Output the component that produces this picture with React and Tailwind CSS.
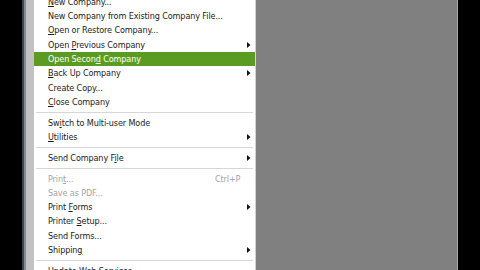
const items = [
  { label: 'New Company...', key: 0 },
  { label: 'New Company from Existing Company File...' },
  { label: 'Open or Restore Company...', key: 0 },
  { label: 'Open Previous Company', key: 5, sub: true },
  { label: 'Open Second Company', key: 10, active: true },
  { label: 'Back Up Company', key: 0, sub: true },
  { label: 'Create Copy...' },
  { label: 'Close Company', key: 0 },
  { sep: true },
  { label: 'Switch to Multi-user Mode', key: 2 },
  { label: 'Utilities', key: 0, sub: true },
  { sep: true },
  { label: 'Send Company File', key: 14, sub: true },
  { sep: true },
  { label: 'Print...', key: 4, disabled: true, shortcut: 'Ctrl+P' },
  { label: 'Save as PDF...', disabled: true },
  { label: 'Print Forms', key: 6, sub: true },
  { label: 'Printer Setup...', key: 8 },
  { label: 'Send Forms...' },
  { label: 'Shipping', key: 7, sub: true },
  { sep: true },
  { label: 'Update Web Services' },
];

const Label = ({ text, k }) => {
  if (k === undefined) return <span>{text}</span>;
  return (
    <span>
      {text.slice(0, k)}
      <span className="underline underline-offset-[1px]">{text[k]}</span>
      {text.slice(k + 1)}
    </span>
  );
};

const Arrow = () => (
  <svg width="4" height="6" viewBox="0 0 4 6" className="absolute left-[213px] top-[4px]">
    <path d="M0 0 L3.5 3 L0 6 Z" fill="#111" />
  </svg>
);

const App = () => {
  return (
    <div
      className="flex w-[480px] h-[270px] overflow-hidden bg-black"
      style={{ fontFamily: '"DejaVu Sans Condensed", "Liberation Sans", sans-serif' }}
    >
      <div className="w-[22px] bg-black" />
      <div className="w-[2px] bg-[#3d4552]" />
      <div className="w-[2px] bg-[#868a92]" />
      <div className="w-[8px] bg-[#c2c2c4]" />

      <div className="w-[221px] bg-white">
        <div className="mt-[-5.2px]">
          {items.map((it, i) =>
            it.sep ? (
              <div key={i} className="h-[6.5px] pt-[3px] pl-[2px] pr-[2px]">
                <div className="h-px bg-[#d6d6d6]" />
              </div>
            ) : (
              <div
                key={i}
                className={`relative h-[14.3px] pl-[14px] text-[9px] leading-[14.3px] tracking-[-0.12px] whitespace-nowrap ${
                  it.active ? 'bg-[#5a9c22] text-white' : it.disabled ? 'text-[#a4a4a4]' : 'text-[#1c1c1c]'
                }`}
              >
                <Label text={it.label} k={it.key} />
                {it.shortcut && <span className="absolute left-[181px] top-0">{it.shortcut}</span>}
                {it.sub && <Arrow />}
              </div>
            )
          )}
        </div>
      </div>

      <div className="w-px bg-[#d2d2d2]" />
      <div className="w-[201px] bg-[#808080]" />
      <div className="w-px bg-[#a8a8a8]" />
      <div className="flex-1 bg-black" />
    </div>
  );
};

export default App;
